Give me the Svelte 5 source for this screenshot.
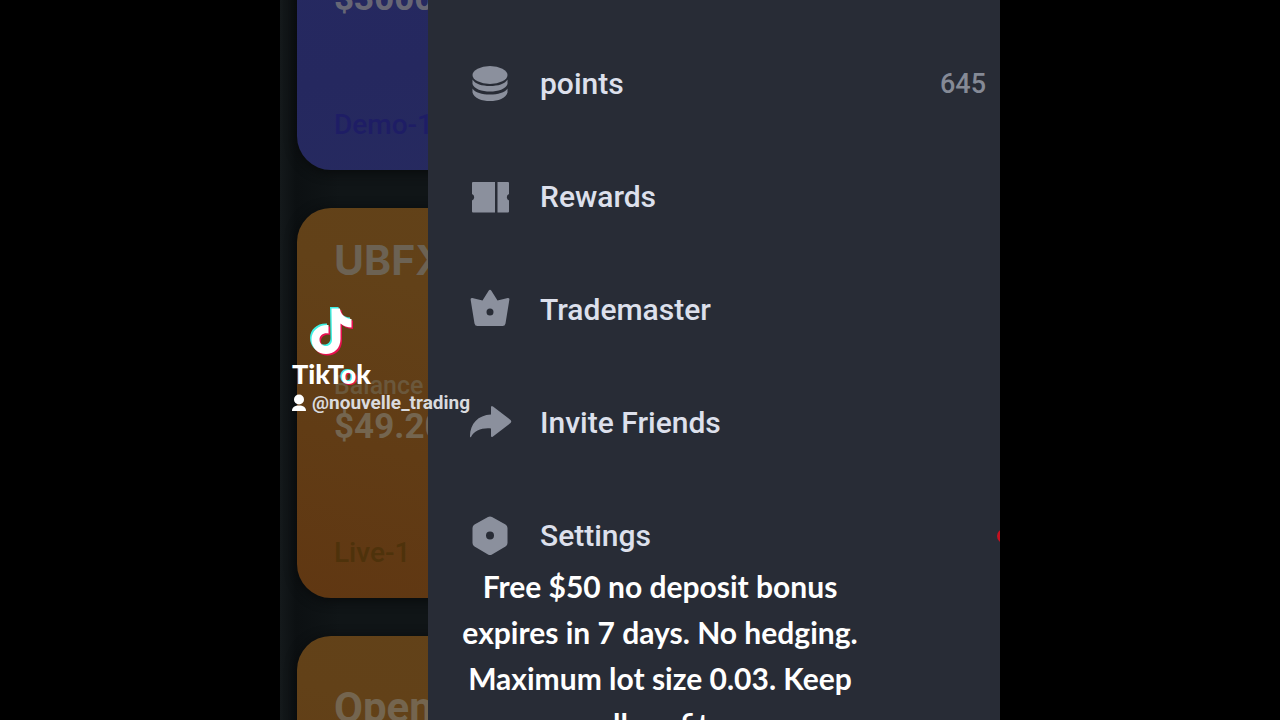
<script lang="ts">
  // Types
  interface Account {
    id: string;
    theme: "demo" | "live";
    brand?: string;
    title?: string;
    label?: string;
    balance?: string;
    name?: string;
  }

  interface MenuItem {
    icon: string;
    label: string;
    value?: string;
    badge?: boolean;
  }

  // State
  const accounts: Account[] = [
    { id: "demo-1", theme: "demo", label: "Balance", balance: "$3000.00", name: "Demo-1" },
    { id: "live-1", theme: "live", brand: "UBFX", label: "Balance", balance: "$49.20", name: "Live-1" },
    { id: "open", theme: "live", title: "Open Account" },
  ];

  const menu: MenuItem[] = [
    { icon: "points", label: "points", value: "645" },
    { icon: "rewards", label: "Rewards" },
    { icon: "trademaster", label: "Trademaster" },
    { icon: "invite", label: "Invite Friends" },
    { icon: "settings", label: "Settings", badge: true },
  ];

  const caption = [
    "Free $50 no deposit bonus",
    "expires in 7 days. No hedging.",
    "Maximum lot size 0.03. Keep",
    "all profits",
  ];
</script>

<main class="stage">
  <div class="phone">
    <section class="accounts">
      <div class="list">
        {#each accounts as account (account.id)}
          <article class="card {account.theme}">
            {#if account.title}
              <h2 class="title">{account.title}</h2>
            {:else}
              <div class="brand">{account.brand ?? ""}</div>
              <div class="label">{account.label}</div>
              <div class="balance">{account.balance}</div>
              <div class="name">{account.name}</div>
            {/if}
          </article>
        {/each}
      </div>
    </section>

    <nav class="drawer">
      {#each menu as item (item.icon)}
        <a class="row" href="#{item.icon}">
          <svg class="icon" viewBox="0 0 40 40" aria-hidden="true">
            {#if item.icon === "points"}
              <ellipse cx="20" cy="11" rx="17.500" ry="9" />
              <path d="M2.500 15.500C5 20 12 22 20 22S35 20 37.500 15.500V20C36 25 28 27.500 20 27.500S4 25 2.500 20Z" />
              <path d="M2.500 24.500C5 28.500 12 30.500 20 30.500S35 28.500 37.500 24.500V28.500C36 34.500 28 37 20 37S4 34.500 2.500 28.500Z" />
            {:else if item.icon === "rewards"}
              <path d="M3 5H25V35.500H3Q2 35.500 2 34.500V23.500A3.500 3.500 0 0 0 2 17V6Q2 5 3 5Z" />
              <path d="M27.500 5H38Q39 5 39 6V17A3.500 3.500 0 0 0 39 23.500V34.500Q39 35.500 38 35.500H27.500Z" />
            {:else if item.icon === "trademaster"}
              <path fill-rule="evenodd" d="M18.800 0.500Q20 -1 21.200 0.500L27.500 10.500L37.800 8Q39.600 7.800 39.400 9.500L35.500 33.500Q35 36 32.500 36H7.500Q5 36 4.500 33.500L0.600 9.500Q0.400 7.800 2.200 8L12.500 10.500ZM20 18.500A3.500 3.500 0 1 0 20 25.500A3.500 3.500 0 1 0 20 18.500Z" />
            {:else if item.icon === "invite"}
              <path d="M21 4.500Q21 2 23 3.500L40.500 17Q42 18.500 40.500 20L23 33.500Q21 35 21 32.500V25.500C12 24.500 4 28 1 34Q0 35 0 33C0 21 8 12 21 11.500Z" />
            {:else}
              <path fill-rule="evenodd" d="M18 1Q20 0 22 1L35.500 8.500Q37.500 9.800 37.500 12V27Q37.500 29.200 35.500 30.500L22 38.500Q20 39.500 18 38.500L4.500 30.500Q2.500 29.200 2.500 27V12Q2.500 9.800 4.500 8.500ZM20 15.500A4 4 0 1 0 20 23.500A4 4 0 1 0 20 15.500Z" />
            {/if}
          </svg>
          <span class="text">{item.label}</span>
          {#if item.value}
            <span class="value">{item.value}</span>
          {/if}
          {#if item.badge}
            <span class="badge"></span>
          {/if}
        </a>
      {/each}
    </nav>

    <div class="watermark">
      <svg class="note" viewBox="0 0 48 52" aria-hidden="true">
        <defs>
          <path
            id="note-shape"
            d="M22 1H30.500C31 7 35.500 11 42 11.500V20C38 20 34 18.600 31 16V31.500C31 41 24.500 46.500 16.500 46.500S2 40.500 2 32S9 17 19 17.500V26C14 25 10 28 10 32C10 36 13 38.500 16.500 38.500S22.500 36 22.500 32Z"
          />
        </defs>
        <use href="#note-shape" x="0" y="0" fill="#3ff0e4" />
        <use href="#note-shape" x="3" y="3" fill="#e8104f" />
        <use href="#note-shape" x="1.500" y="1.500" fill="#ffffff" />
      </svg>
      <div class="wordmark">TikT<span class="glow">o</span>k</div>
      <div class="handle">
        <svg class="person" viewBox="0 0 14 18" aria-hidden="true">
          <circle cx="7" cy="5.500" r="5" />
          <path d="M0 17C0 13 3 11.500 7 11.500S14 13 14 17Z" />
        </svg>
        <span>@nouvelle_trading</span>
      </div>
    </div>

    <p class="caption">
      {#each caption as line}
        <span>{line}</span>
      {/each}
    </p>
  </div>
</main>

<style>
  :global(body) {
    margin: 0;
    background: #000;
  }

  .stage {
    display: flex;
    justify-content: center;
    height: 100vh;
    overflow: hidden;
    font-family: Roboto, "Liberation Sans", sans-serif;
  }

  .phone {
    position: relative;
    display: flex;
    width: 100%;
    max-width: 720px;
    overflow: hidden;
    background: #101517;
  }

  .accounts {
    flex: 0 0 148px;
    overflow: hidden;
    background: linear-gradient(90deg, #14191b, #0c1012 16px, #101517 60px);
  }

  /* The list is scrolled part of the way down */
  .list {
    display: flex;
    flex-direction: column;
    gap: 38px;
    width: 686px;
    margin-top: -220px;
    padding-left: 17px;
  }

  .card {
    box-sizing: border-box;
    display: flex;
    flex-direction: column;
    height: 390px;
    padding: 30px 37px 29px;
    border-radius: 34px;
    box-shadow: 0 2px 12px #080a0b;
  }

  .demo {
    color: #666675;
    background: linear-gradient(170deg, #262a62, #25285f 60%, #272b60);
  }

  .live {
    color: #74654f;
    background: linear-gradient(15deg, #603712, #624118 60%, #62431a);
  }

  .brand {
    height: 44px;
    font: 700 41px/44px Inter, sans-serif;
    color: #6c6253;
  }

  .label {
    margin-top: 88px;
    font-size: 25px;
    font-weight: 500;
    line-height: 32px;
    color: #6b583c;
  }

  .balance {
    margin-top: 4px;
    font-size: 35px;
    font-weight: 700;
    line-height: 42px;
  }

  .name {
    margin-top: auto;
    font-size: 28px;
    font-weight: 500;
    line-height: 32px;
  }

  .demo .name {
    color: #1e1d65;
  }

  .live .name {
    color: #4e320b;
  }

  .title {
    margin: 16px 0 0;
    font-size: 42px;
    font-weight: 700;
    line-height: 52px;
  }

  .drawer {
    flex: 1;
    min-width: 0;
    padding-top: 27px;
    background: #282c36;
  }

  .row {
    position: relative;
    display: flex;
    align-items: center;
    gap: 30px;
    height: 113px;
    padding: 0 14px 0 42px;
    color: #dde0ec;
    font-size: 30px;
    font-weight: 500;
    line-height: 36px;
    text-decoration: none;
  }

  .icon {
    flex: none;
    width: 40px;
    height: 40px;
    overflow: visible;
    fill: #8b909d;
  }

  .text {
    flex: 1;
  }

  .value {
    color: #858a96;
    font-size: 27px;
  }

  .badge {
    position: absolute;
    right: -11px;
    width: 14px;
    height: 14px;
    border-radius: 50%;
    background: #c4101f;
  }

  .watermark {
    position: absolute;
    top: 306px;
    left: 12px;
    color: #fff;
  }

  .note {
    display: block;
    width: 48px;
    height: 52px;
    margin-left: 16px;
  }

  .wordmark {
    font: 900 27px/32px Lato, sans-serif;
  }

  .glow {
    text-shadow: -1px -1px #3ff0e4, 1px 1px #e8104f;
  }

  .handle {
    display: flex;
    align-items: center;
    gap: 6px;
    color: #d9dade;
    font-size: 19px;
    font-weight: 700;
    line-height: 26px;
  }

  .person {
    width: 14px;
    height: 18px;
    fill: #fff;
  }

  .caption {
    position: absolute;
    top: 563px;
    left: 140px;
    display: flex;
    flex-direction: column;
    width: 480px;
    margin: 0;
    color: #fff;
    font: 700 30px/46px Lato, sans-serif;
    text-align: center;
    white-space: nowrap;
  }
</style>
